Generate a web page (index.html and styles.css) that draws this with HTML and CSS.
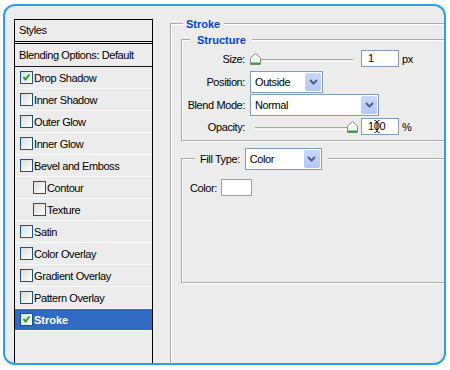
FILE: index.html
```html
<!DOCTYPE html>
<html lang="en">
<head>
    <meta charset="utf-8">
    <title>Layer Style - Stroke</title>
    <link rel="stylesheet" href="styles.css">
</head>
<body>
<div class="frame">
    <div class="styles-list">
        <div class="list-head">Styles</div>
        <div class="list-blend">Blending Options: Default</div>
        <div class="item"><span class="cb"><svg width="11" height="11" viewBox="0 0 11 11"><path d="M2.5 5 L4.5 7.5 L8.5 2.5" fill="none" stroke="#21a121" stroke-width="2"/></svg></span>Drop Shadow</div>
        <div class="item"><span class="cb"></span>Inner Shadow</div>
        <div class="item"><span class="cb"></span>Outer Glow</div>
        <div class="item"><span class="cb"></span>Inner Glow</div>
        <div class="item"><span class="cb"></span>Bevel and Emboss</div>
        <div class="item sub"><span class="cb"></span>Contour</div>
        <div class="item sub"><span class="cb"></span>Texture</div>
        <div class="item"><span class="cb"></span>Satin</div>
        <div class="item"><span class="cb"></span>Color Overlay</div>
        <div class="item"><span class="cb"></span>Gradient Overlay</div>
        <div class="item"><span class="cb"></span>Pattern Overlay</div>
        <div class="item selected"><span class="cb"><svg width="11" height="11" viewBox="0 0 11 11"><path d="M2.5 5 L4.5 7.5 L8.5 2.5" fill="none" stroke="#21a121" stroke-width="2"/></svg></span>Stroke</div>
    </div>

    <fieldset class="group stroke">
        <legend class="group-title">Stroke</legend>

        <fieldset class="group structure">
            <legend class="group-title">Structure</legend>

            <div class="row row-size">
                <span class="label">Size:</span>
                <div class="slider">
                    <div class="track"></div>
                    <svg class="thumb thumb-min" width="11" height="12" viewBox="0 0 11 12"><path d="M0.5 5 L5.5 0.5 L10.5 5 V11.5 H0.5 Z" fill="#f7f7f7" stroke="#8a8a8a"/><path d="M1 10.5 H10" stroke="#2f9f3a" stroke-width="2"/></svg>
                </div>
                <div class="field">1</div>
                <span class="unit">px</span>
            </div>

            <div class="row row-position">
                <span class="label">Position:</span>
                <div class="combo combo-position">
                    <span class="combo-text">Outside</span>
                    <span class="combo-btn"><svg width="9" height="6" viewBox="0 0 9 6"><path d="M1 1 L4.5 4.5 L8 1" fill="none" stroke="#4d6185" stroke-width="2"/></svg></span>
                </div>
            </div>

            <div class="row row-blend">
                <span class="label">Blend Mode:</span>
                <div class="combo combo-blend">
                    <span class="combo-text">Normal</span>
                    <span class="combo-btn"><svg width="9" height="6" viewBox="0 0 9 6"><path d="M1 1 L4.5 4.5 L8 1" fill="none" stroke="#4d6185" stroke-width="2"/></svg></span>
                </div>
            </div>

            <div class="row row-opacity">
                <span class="label">Opacity:</span>
                <div class="slider">
                    <div class="track"></div>
                    <svg class="thumb thumb-max" width="11" height="12" viewBox="0 0 11 12"><path d="M0.5 5 L5.5 0.5 L10.5 5 V11.5 H0.5 Z" fill="#f7f7f7" stroke="#8a8a8a"/><path d="M1 10.5 H10" stroke="#2f9f3a" stroke-width="2"/></svg>
                </div>
                <div class="field">100
                    <svg class="ibeam" width="6" height="13" viewBox="0 0 6 13"><path d="M0.5 0.5 C2 0.5 3 1 3 2.5 V10.5 C3 12 2 12.5 0.5 12.5 M5.5 0.5 C4 0.5 3 1 3 2.5 M3 10.5 C3 12 4 12.5 5.5 12.5" fill="none" stroke="#000"/></svg>
                </div>
                <span class="unit">%</span>
            </div>
        </fieldset>

        <fieldset class="group fill">
            <legend>
                <div class="legend-row">
                    <span class="fill-label">Fill Type:</span>
                    <div class="combo combo-fill">
                        <span class="combo-text">Color</span>
                        <span class="combo-btn"><svg width="9" height="6" viewBox="0 0 9 6"><path d="M1 1 L4.5 4.5 L8 1" fill="none" stroke="#4d6185" stroke-width="2"/></svg></span>
                    </div>
                </div>
            </legend>

            <div class="row row-color">
                <span>Color:</span>
                <span class="swatch"></span>
            </div>
        </fieldset>
    </fieldset>
</div>
</body>
</html>
```

FILE: styles.css
```css
body {
    margin: 0;
    background: #fff;
    font-family: "Liberation Sans", Arial, sans-serif;
    font-size: 11px;
    letter-spacing: -0.4px;
    color: #000;
}

.frame {
    display: flex;
    align-items: flex-start;
    box-sizing: border-box;
    width: 443px;
    height: 361px;
    margin: 4px 0 0 3px;
    border: 2px solid #2a9fea;
    border-radius: 12px;
    background: #ececec;
    overflow: hidden;
}

/* left list of effects */

.styles-list {
    flex: none;
    box-sizing: border-box;
    width: 139px;
    height: 360px;
    margin: 13px 0 0 9px;
    border: 1px solid #000;
    border-bottom: 0;
}

.list-head {
    height: 21px;
    line-height: 21px;
    padding-left: 4px;
    border-bottom: 3px double #000;
}

.list-blend {
    height: 22px;
    line-height: 22px;
    padding-left: 4px;
    border-bottom: 1px solid #1a1a1a;
}

.item {
    display: flex;
    align-items: center;
    height: 21px;
    padding-left: 5px;
    border-bottom: 1px solid #fafafa;
}

.item.sub {
    padding-left: 18px;
}

.item.selected {
    background: #316ac5;
    color: #fff;
    font-weight: bold;
    letter-spacing: 0;
}

.cb {
    display: flex;
    flex: none;
    box-sizing: border-box;
    width: 13px;
    height: 13px;
    margin-right: 1px;
    border: 1px solid #1c5180;
    background: linear-gradient(135deg, #dcdcd7, #fff);
}

/* group boxes */

.group {
    margin: 0;
    padding: 0;
    min-width: 0;
    border: 2px groove #fff;
}

legend {
    padding: 0;
    line-height: 12px;
}

.group-title {
    color: #0046d5;
    font-weight: bold;
    letter-spacing: 0;
}

.stroke {
    flex: none;
    box-sizing: border-box;
    width: 300px;
    height: 400px;
    margin: 12px 0 0 17px;
    padding: 4px 0 0 9px;
}

.stroke > legend {
    margin-left: 2px;
    padding: 0 4px 0 3px;
}

.structure {
    padding: 4px 0 5px;
}

.structure > legend {
    margin-left: 7px;
    padding: 0 6px 0 7px;
}

.row {
    display: flex;
    align-items: center;
}

.label {
    flex: none;
    width: 62px;
    margin-right: 5px;
    text-align: right;
}

.row-size {
    height: 17px;
}

.row-position {
    height: 22px;
    margin-top: 4px;
}

.row-blend {
    height: 22px;
    margin-top: 1px;
}

.row-opacity {
    height: 17px;
    margin-top: 2px;
}

/* slider */

.slider {
    position: relative;
    flex: none;
    align-self: flex-start;
    width: 108px;
    height: 12px;
    margin: 3px 3px 0 0;
}

.track {
    height: 1px;
    margin: 6px 5px 0;
    border-top: 1px solid #a4a4a4;
    border-bottom: 1px solid #fff;
}

.thumb {
    position: absolute;
    top: 0;
}

.thumb-min {
    left: 0;
}

.thumb-max {
    right: 0;
}

.field {
    position: relative;
    flex: none;
    box-sizing: border-box;
    width: 38px;
    height: 17px;
    padding-left: 6px;
    line-height: 15px;
    border: 1px solid #7f9db9;
    background: #fff;
}

.ibeam {
    position: absolute;
    left: 12px;
    top: 1px;
}

.unit {
    margin-left: 3px;
}

/* combo boxes */

.combo {
    display: flex;
    flex: none;
    box-sizing: border-box;
    height: 22px;
    padding: 1px;
    border: 1px solid #7f9db9;
    background: #fff;
}

.combo-text {
    flex: 1;
    padding-left: 3px;
    line-height: 18px;
}

.combo-btn {
    display: flex;
    align-items: center;
    justify-content: center;
    width: 16px;
    border-radius: 2px;
    background: linear-gradient(#cbd8fb, #b3c6f5);
}

.combo-position {
    width: 73px;
}

.combo-blend {
    width: 129px;
}

.combo-fill {
    width: 77px;
}

/* fill type */

.fill {
    margin-top: 6px;
    padding: 9px 0 86px 7px;
}

.fill > legend {
    margin-left: 5px;
    padding: 0 6px 0 5px;
}

.legend-row {
    display: flex;
    align-items: center;
}

.fill-label {
    margin-right: 5px;
}

.row-color {
    height: 17px;
}

.swatch {
    box-sizing: border-box;
    width: 31px;
    height: 17px;
    margin-left: 4px;
    border: 1px solid #a0a0a0;
    background: #fff;
}
```
